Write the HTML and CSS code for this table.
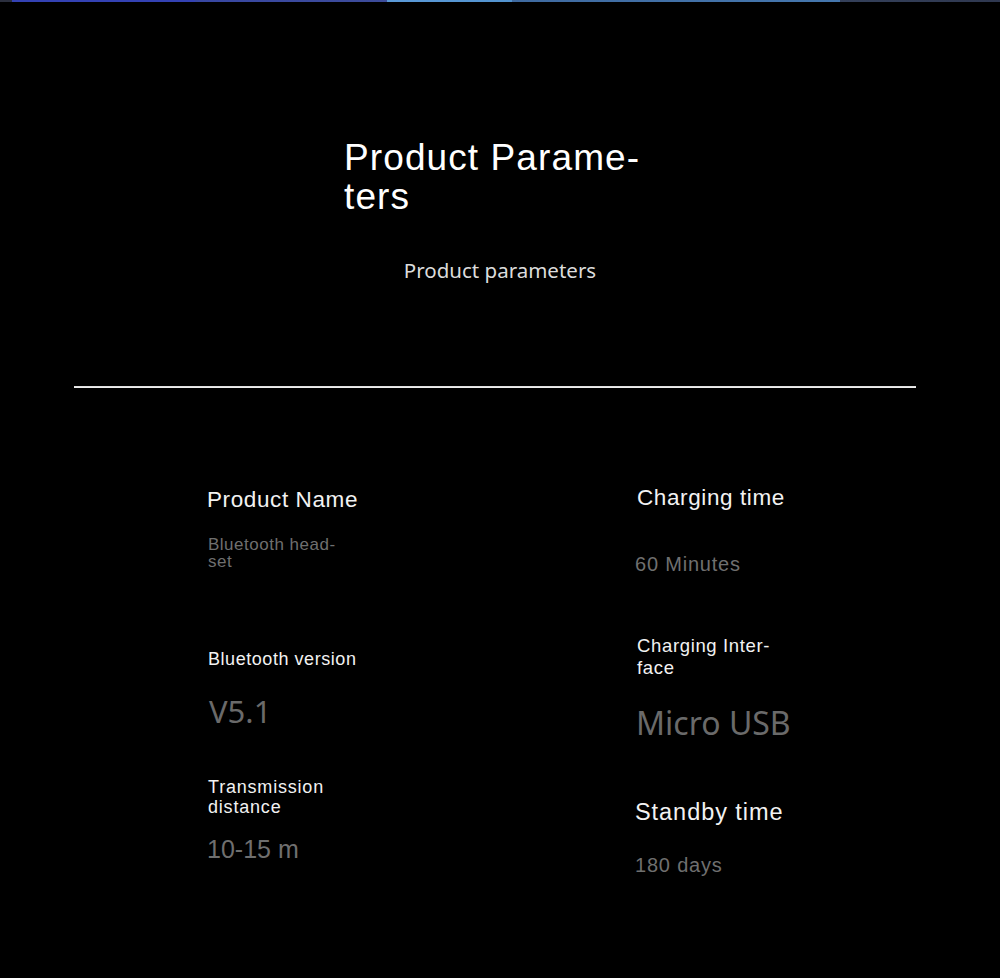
FILE: index.html
```html
<!DOCTYPE html>
<html lang="en">
<head>
<meta charset="utf-8">
<title>Product Parameters</title>
<link rel="stylesheet" href="styles.css">
</head>
<body>
<div class="topbar"></div>
<header class="head">
  <h1 class="title">Product Parame-<br>ters</h1>
  <p class="subtitle">Product parameters</p>
</header>
<hr class="divider">
<section class="params">
  <div class="col col-left">
    <div class="lbl lbl-name">Product Name</div>
    <div class="val val-name">Bluetooth head-<br>set</div>
    <div class="lbl lbl-btv">Bluetooth version</div>
    <div class="val val-btv">V5.1</div>
    <div class="lbl lbl-dist">Transmission<br>distance</div>
    <div class="val val-dist">10-15 m</div>
  </div>
  <div class="col col-right">
    <div class="lbl lbl-ct">Charging time</div>
    <div class="val val-ct">60 Minutes</div>
    <div class="lbl lbl-ci">Charging Inter-<br>face</div>
    <div class="val val-ci">Micro USB</div>
    <div class="lbl lbl-st">Standby time</div>
    <div class="val val-st">180 days</div>
  </div>
</section>
</body>
</html>
```

FILE: styles.css
```css
html, body {
  margin: 0;
  padding: 0;
  background: #000;
}
body {
  width: 1000px;
  height: 978px;
  overflow: hidden;
  font-family: "Liberation Sans", Arial, sans-serif;
  color: #f0f0f0;
}
.topbar {
  height: 2px;
  background: linear-gradient(to right,
    #2b2f3e 0, #2b2f3e 12px,
    #3442b4 12px, #3442b4 195px,
    #3847a3 195px, #3d4c9a 387px,
    #5b9ad8 387px, #5293cf 512px,
    #3f6aa0 512px, #4577ae 840px,
    #34405a 840px, #2f3850 1000px);
}
.head {
  margin-top: 137px;
}
.title {
  margin: 0 0 0 344px;
  font-weight: normal;
  font-size: 37px;
  line-height: 38.5px;
  letter-spacing: 1.1px;
  color: #fff;
}
.subtitle {
  margin: 44px 0 0 0;
  text-align: center;
  font-family: "Noto Sans", "Open Sans", sans-serif;
  font-size: 20.5px;
  line-height: 20px;
  color: #dcdcdc;
}
.divider {
  margin: 106px 0 0 74px;
  width: 842px;
  height: 2px;
  border: 0;
  background: linear-gradient(#d8d8d8, #f4f4f4);
}
.params {
  margin-top: 96px;
  padding-left: 207px;
  display: grid;
  grid-template-columns: 430px 1fr;
}
.col {
  display: flex;
  flex-direction: column;
  align-items: flex-start;
}
.lbl {
  color: #f2f2f2;
  line-height: 1.15;
}
.val {
  color: #6f6f6f;
  line-height: 1.15;
}
/* left column */
.lbl-name {
  margin-top: 3px;
  font-size: 22.5px;
  letter-spacing: 0.6px;
}
.val-name {
  margin-top: 23px;
  margin-left: 1px;
  font-size: 17px;
  line-height: 17px;
  letter-spacing: 0.5px;
}
.lbl-btv {
  margin-top: 79px;
  margin-left: 1px;
  font-size: 18px;
  letter-spacing: 0.55px;
}
.val-btv {
  margin-top: 26px;
  margin-left: 2px;
  font-family: "Noto Sans", "Open Sans", sans-serif;
  font-size: 31px;
  line-height: 31px;
  color: #6a6a6a;
}
.lbl-dist {
  margin-top: 50px;
  margin-left: 1px;
  font-size: 18px;
  line-height: 20px;
  letter-spacing: 0.8px;
}
.val-dist {
  margin-top: 18px;
  font-size: 25px;
}
/* right column */
.col-right {
  margin-left: -2px;
  padding-top: 0.5px;
}
.lbl-ct {
  margin-left: 2px;
  font-size: 22.5px;
  letter-spacing: 0.6px;
}
.val-ct {
  margin-top: 42.5px;
  font-size: 20px;
  letter-spacing: 0.8px;
}
.lbl-ci {
  margin-top: 59.5px;
  margin-left: 2px;
  font-size: 18.5px;
  line-height: 22px;
  letter-spacing: 0.65px;
}
.val-ci {
  margin-top: 27.5px;
  margin-left: 1px;
  font-family: "Noto Sans", "Open Sans", sans-serif;
  font-size: 32px;
  line-height: 31px;
  color: #6a6a6a;
}
.lbl-st {
  margin-top: 61.5px;
  font-size: 23.5px;
  letter-spacing: 0.95px;
}
.val-st {
  margin-top: 27.5px;
  font-size: 20px;
  letter-spacing: 0.8px;
}
```
